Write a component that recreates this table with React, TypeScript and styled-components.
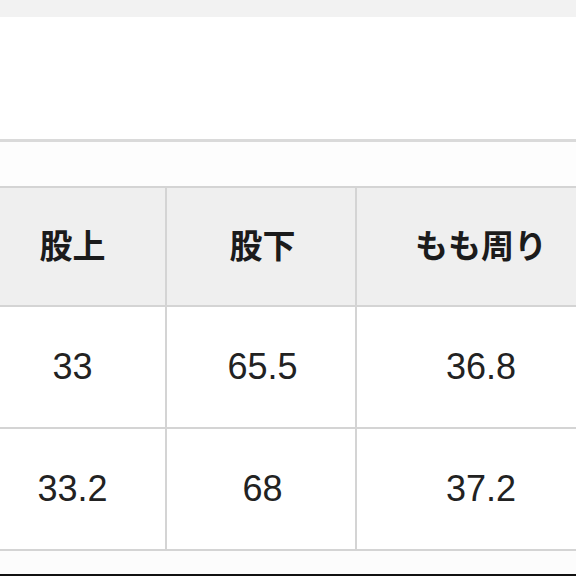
import React from "react";
import styled, { createGlobalStyle } from "styled-components";

const Global = createGlobalStyle`
  html, body { margin: 0; padding: 0; background: #ffffff; }
  body { font-family: "Liberation Sans", "Noto Sans CJK JP", sans-serif; }
  #root { width: 576px; height: 576px; overflow: hidden; }
`;

const Page = styled.div`
  width: 576px;
  height: 576px;
  display: flex;
  flex-direction: column;
  overflow: hidden;
  background: #ffffff;
`;

const TopBand = styled.div`
  height: 17px;
  background: #f2f2f2;
  flex-shrink: 0;
`;

const Blank = styled.div<{ $h: number; $bg?: string }>`
  height: ${(p) => p.$h}px;
  background: ${(p) => p.$bg ?? "#ffffff"};
  flex-shrink: 0;
`;

const Divider = styled.div`
  height: 3px;
  background: #dadada;
  flex-shrink: 0;
`;

const TableWrap = styled.div`
  flex-shrink: 0;
  overflow: hidden;
`;

const Grid = styled.div`
  display: grid;
  grid-template-columns: 188px 188px 245px;
  grid-template-rows: 117px 120px 120px;
  gap: 2px;
  padding: 2px 0;
  margin-left: -23px;
  width: 630px;
  background: #d4d4d4;
`;

const Cell = styled.div<{ $head?: boolean }>`
  display: flex;
  align-items: center;
  justify-content: center;
  padding-left: 3px;
  padding-bottom: ${(p) => (p.$head ? "5px" : "0")};
  background: ${(p) => (p.$head ? "#efefef" : "#ffffff")};
  color: ${(p) => (p.$head ? "#1b1b1b" : "#222222")};
  font-family: ${(p) =>
    p.$head
      ? `"Noto Sans CJK JP", "Noto Sans", sans-serif`
      : `"Liberation Sans", Arial, sans-serif`};
  font-weight: ${(p) => (p.$head ? 700 : 400)};
  font-size: ${(p) => (p.$head ? "33px" : "36px")};
  line-height: 1;
  white-space: nowrap;
`;

const BottomBar = styled.div`
  height: 2px;
  background: #111111;
  flex-shrink: 0;
`;

const headers = ["股上", "股下", "もも周り"];
const rows = [
  ["33", "65.5", "36.8"],
  ["33.2", "68", "37.2"],
];

export default function App() {
  return (
    <>
      <Global />
      <Page>
        <TopBand />
        <Blank $h={122} />
        <Divider />
        <Blank $h={44} $bg="#fdfdfd" />
        <TableWrap>
          <Grid>
            {headers.map((h) => (
              <Cell key={h} $head>
                {h}
              </Cell>
            ))}
            {rows.map((r, i) =>
              r.map((v, j) => <Cell key={`${i}-${j}`}>{v}</Cell>)
            )}
          </Grid>
        </TableWrap>
        <Blank $h={23} $bg="#fcfcfc" />
        <BottomBar />
      </Page>
    </>
  );
}
